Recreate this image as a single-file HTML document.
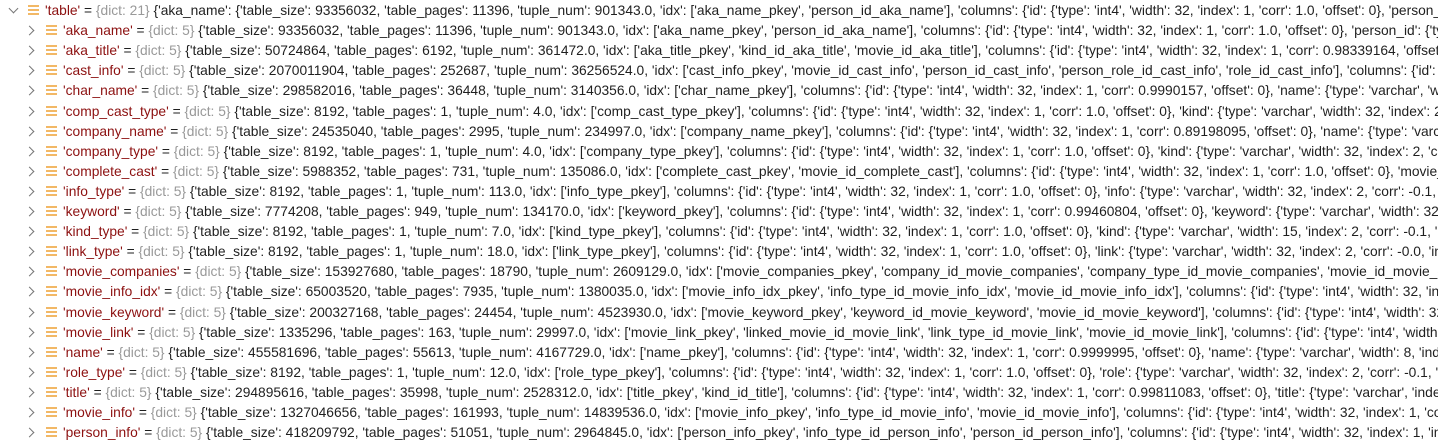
<!DOCTYPE html>
<html><head><meta charset="utf-8"><style>
html,body{margin:0;padding:0;background:#fff;width:1438px;height:444px;overflow:hidden}
body{font-family:"Liberation Sans",Arial,sans-serif;font-size:13.8px;color:#1f1f1f}
.r{position:absolute;height:20px;line-height:20px;white-space:nowrap;left:0;width:1438px;overflow:hidden}
.ch{position:absolute;top:6px;width:6px;height:6px;border-right:1.3px solid #777;border-bottom:1.3px solid #777}
.c{transform:rotate(-45deg)}
.o{transform:rotate(45deg);top:4px}
.ic{position:absolute;top:4px;width:11px;height:11px;background:repeating-linear-gradient(#f2b866 0 2px,transparent 2px 4px)}
.t{position:absolute;top:0}
.k{color:#8c1010}.g{color:#999}
</style></head><body>
<div class="r" style="top:1px"><span class="ch o" style="left:10px"></span><span class="ic" style="left:28px"></span><span class="t" style="left:45px"><span class="k">'table'</span> = <span class="g">{dict: 21}</span> {'aka_name': {'table_size': 93356032, 'table_pages': 11396, 'tuple_num': 901343.0, 'idx': ['aka_name_pkey', 'person_id_aka_name'], 'columns': {'id': {'type': 'int4', 'width': 32, 'index': 1, 'corr': 1.0, 'offset': 0}, 'person_id': {</span></div>
<div id="rows"></div>
<script>
var X=", 'index': 2, 'corr': 0.5, 'offset': 0}}}";
var d=[
["aka_name","{'table_size': 93356032, 'table_pages': 11396, 'tuple_num': 901343.0, 'idx': ['aka_name_pkey', 'person_id_aka_name'], 'columns': {'id': {'type': 'int4', 'width': 32, 'index': 1, 'corr': 1.0, 'offset': 0}, 'person_id': {'type'"],
["aka_title","{'table_size': 50724864, 'table_pages': 6192, 'tuple_num': 361472.0, 'idx': ['aka_title_pkey', 'kind_id_aka_title', 'movie_id_aka_title'], 'columns': {'id': {'type': 'int4', 'width': 32, 'index': 1, 'corr': 0.98339164, 'offset'"],
["cast_info","{'table_size': 2070011904, 'table_pages': 252687, 'tuple_num': 36256524.0, 'idx': ['cast_info_pkey', 'movie_id_cast_info', 'person_id_cast_info', 'person_role_id_cast_info', 'role_id_cast_info'], 'columns': {'id': {'type'"],
["char_name","{'table_size': 298582016, 'table_pages': 36448, 'tuple_num': 3140356.0, 'idx': ['char_name_pkey'], 'columns': {'id': {'type': 'int4', 'width': 32, 'index': 1, 'corr': 0.9990157, 'offset': 0}, 'name': {'type': 'varchar', 'width'"],
["comp_cast_type","{'table_size': 8192, 'table_pages': 1, 'tuple_num': 4.0, 'idx': ['comp_cast_type_pkey'], 'columns': {'id': {'type': 'int4', 'width': 32, 'index': 1, 'corr': 1.0, 'offset': 0}, 'kind': {'type': 'varchar', 'width': 32, 'index': 2"],
["company_name","{'table_size': 24535040, 'table_pages': 2995, 'tuple_num': 234997.0, 'idx': ['company_name_pkey'], 'columns': {'id': {'type': 'int4', 'width': 32, 'index': 1, 'corr': 0.89198095, 'offset': 0}, 'name': {'type': 'varchar'"],
["company_type","{'table_size': 8192, 'table_pages': 1, 'tuple_num': 4.0, 'idx': ['company_type_pkey'], 'columns': {'id': {'type': 'int4', 'width': 32, 'index': 1, 'corr': 1.0, 'offset': 0}, 'kind': {'type': 'varchar', 'width': 32, 'index': 2, 'corr'"],
["complete_cast","{'table_size': 5988352, 'table_pages': 731, 'tuple_num': 135086.0, 'idx': ['complete_cast_pkey', 'movie_id_complete_cast'], 'columns': {'id': {'type': 'int4', 'width': 32, 'index': 1, 'corr': 1.0, 'offset': 0}, 'movie_id'"],
["info_type","{'table_size': 8192, 'table_pages': 1, 'tuple_num': 113.0, 'idx': ['info_type_pkey'], 'columns': {'id': {'type': 'int4', 'width': 32, 'index': 1, 'corr': 1.0, 'offset': 0}, 'info': {'type': 'varchar', 'width': 32, 'index': 2, 'corr': -0.1"],
["keyword","{'table_size': 7774208, 'table_pages': 949, 'tuple_num': 134170.0, 'idx': ['keyword_pkey'], 'columns': {'id': {'type': 'int4', 'width': 32, 'index': 1, 'corr': 0.99460804, 'offset': 0}, 'keyword': {'type': 'varchar', 'width': 32"],
["kind_type","{'table_size': 8192, 'table_pages': 1, 'tuple_num': 7.0, 'idx': ['kind_type_pkey'], 'columns': {'id': {'type': 'int4', 'width': 32, 'index': 1, 'corr': 1.0, 'offset': 0}, 'kind': {'type': 'varchar', 'width': 15, 'index': 2, 'corr': -0.1"],
["link_type","{'table_size': 8192, 'table_pages': 1, 'tuple_num': 18.0, 'idx': ['link_type_pkey'], 'columns': {'id': {'type': 'int4', 'width': 32, 'index': 1, 'corr': 1.0, 'offset': 0}, 'link': {'type': 'varchar', 'width': 32, 'index': 2, 'corr': -0.0"],
["movie_companies","{'table_size': 153927680, 'table_pages': 18790, 'tuple_num': 2609129.0, 'idx': ['movie_companies_pkey', 'company_id_movie_companies', 'company_type_id_movie_companies', 'movie_id_movie_companies'"],
["movie_info_idx","{'table_size': 65003520, 'table_pages': 7935, 'tuple_num': 1380035.0, 'idx': ['movie_info_idx_pkey', 'info_type_id_movie_info_idx', 'movie_id_movie_info_idx'], 'columns': {'id': {'type': 'int4', 'width': 32"],
["movie_keyword","{'table_size': 200327168, 'table_pages': 24454, 'tuple_num': 4523930.0, 'idx': ['movie_keyword_pkey', 'keyword_id_movie_keyword', 'movie_id_movie_keyword'], 'columns': {'id': {'type': 'int4', 'width': 32"],
["movie_link","{'table_size': 1335296, 'table_pages': 163, 'tuple_num': 29997.0, 'idx': ['movie_link_pkey', 'linked_movie_id_movie_link', 'link_type_id_movie_link', 'movie_id_movie_link'], 'columns': {'id': {'type': 'int4', 'width': 32"],
["name","{'table_size': 455581696, 'table_pages': 55613, 'tuple_num': 4167729.0, 'idx': ['name_pkey'], 'columns': {'id': {'type': 'int4', 'width': 32, 'index': 1, 'corr': 0.9999995, 'offset': 0}, 'name': {'type': 'varchar', 'width': 8"],
["role_type","{'table_size': 8192, 'table_pages': 1, 'tuple_num': 12.0, 'idx': ['role_type_pkey'], 'columns': {'id': {'type': 'int4', 'width': 32, 'index': 1, 'corr': 1.0, 'offset': 0}, 'role': {'type': 'varchar', 'width': 32, 'index': 2, 'corr': -0.1"],
["title","{'table_size': 294895616, 'table_pages': 35998, 'tuple_num': 2528312.0, 'idx': ['title_pkey', 'kind_id_title'], 'columns': {'id': {'type': 'int4', 'width': 32, 'index': 1, 'corr': 0.99811083, 'offset': 0}, 'title': {'type': 'varchar'"],
["movie_info","{'table_size': 1327046656, 'table_pages': 161993, 'tuple_num': 14839536.0, 'idx': ['movie_info_pkey', 'info_type_id_movie_info', 'movie_id_movie_info'], 'columns': {'id': {'type': 'int4', 'width': 32, 'index': 1, 'corr'"],
["person_info","{'table_size': 418209792, 'table_pages': 51051, 'tuple_num': 2964845.0, 'idx': ['person_info_pkey', 'info_type_id_person_info', 'person_id_person_info'], 'columns': {'id': {'type': 'int4', 'width': 32, 'index': 1"]];
var h='';
d.forEach(function(r,i){var top=21.1+i*20.1;
h+='<div class="r" style="top:'+top+'px"><span class="ch c" style="left:26px"></span><span class="ic" style="left:46px"></span><span class="t" style="left:63px"><span class="k">\''+r[0]+'\'</span> = <span class="g">{dict: 5}</span> '+r[1]+X+'</span></div>';});
document.getElementById('rows').innerHTML=h;
</script>
</body></html>
